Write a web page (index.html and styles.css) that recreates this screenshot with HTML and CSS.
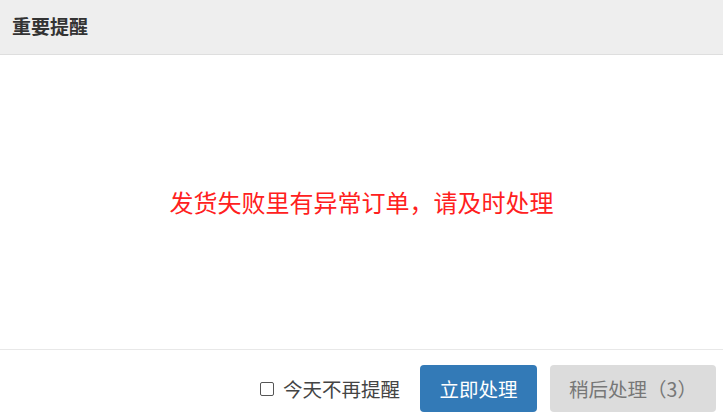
FILE: index.html
```html
<!DOCTYPE html>
<html>
<head>
    <title>重要提醒</title>
    <link rel="stylesheet" href="styles.css">
</head>
<body>
    <div class="dialog">
        <div class="dialog-header">重要提醒</div>
        <div class="dialog-body">
            <p class="message">发货失败里有异常订单，请及时处理</p>
        </div>
        <div class="dialog-footer">
            <label class="remember">
                <span class="box"></span>
                今天不再提醒
            </label>
            <button class="btn btn-primary">立即处理</button>
            <button class="btn btn-later">稍后处理（3）</button>
        </div>
    </div>
</body>
</html>
```

FILE: styles.css
```css
body {
    margin: 0;
    font-family: "Microsoft YaHei", "Noto Sans CJK SC", sans-serif;
    background: #fff;
}

.dialog {
    width: 723px;
    height: 420px;
    display: flex;
    flex-direction: column;
}

.dialog-header {
    height: 54px;
    line-height: 52px;
    padding: 0 12px;
    background-color: #eeeeee;
    border-bottom: 1px solid #dedede;
    font-size: 19px;
    font-weight: bold;
    color: #333;
}

.dialog-body {
    flex: 1;
    display: flex;
    align-items: center;
    justify-content: center;
}

.message {
    margin: 0;
    padding-bottom: 2px;
    font-size: 24px;
    color: #ff2020;
}

.dialog-footer {
    height: 71px;
    box-sizing: border-box;
    padding: 15px 7px 8px 0;
    border-top: 1px solid #e8e8e8;
    display: flex;
    justify-content: flex-end;
    align-items: stretch;
}

.remember {
    display: flex;
    align-items: center;
    font-size: 19.5px;
    color: #444;
    margin-right: 20px;
}

.box {
    width: 12px;
    height: 12px;
    border: 1.5px solid #555;
    border-radius: 2px;
    margin-right: 9px;
}

.btn {
    width: 117px;
    border: none;
    border-radius: 4px;
    font-family: inherit;
    font-size: 19.5px;
    cursor: pointer;
}

.btn-primary {
    background-color: #337ab7;
    color: #fff;
    margin-right: 13px;
}

.btn-later {
    width: 166px;
    background-color: #dcdcdc;
    color: #777;
}
```
